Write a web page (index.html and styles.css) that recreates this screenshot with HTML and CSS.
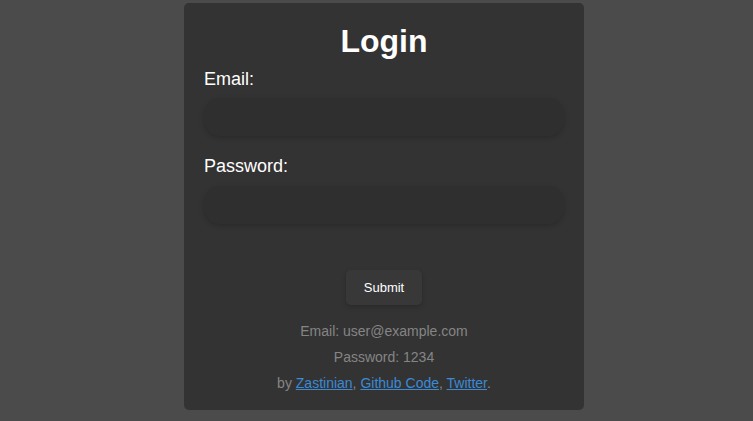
FILE: index.html
```html
<!DOCTYPE html>
<html>
<head>
<meta charset="utf-8">
<link rel="stylesheet" href="styles.css">
</head>
<body>
<div class="card">
  <h1 class="title">Login</h1>
  <form class="form">
    <label class="label" for="email">Email:</label>
    <input class="field" id="email" type="text">
    <label class="label label-pw" for="pw">Password:</label>
    <input class="field" id="pw" type="password">
    <div class="actions"><button class="submit" type="button">Submit</button></div>
  </form>
  <div class="info">
    <p class="line">Email: user@example.com</p>
    <p class="line">Password: 1234</p>
    <p class="line">by <a href="#">Zastinian</a>, <a href="#">Github Code</a>, <a href="#">Twitter</a>.</p>
  </div>
</div>
</body>
</html>
```
FILE: styles.css
```css
html, body {
  margin: 0;
  padding: 0;
  background: #4b4b4b;
  font-family: "Liberation Sans", Arial, sans-serif;
}
body {
  display: flex;
  justify-content: center;
  padding-top: 3px;
  padding-left: 15px;
}
.card {
  width: 400px;
  box-sizing: border-box;
  background: #333333;
  border-radius: 5px;
  padding: 20px 20px 14px;
}
.title {
  margin: 0 0 9px;
  text-align: center;
  color: #ffffff;
  font-size: 32px;
  font-weight: bold;
  line-height: 37px;
}
.form {
  display: flex;
  flex-direction: column;
}
.label {
  color: #ffffff;
  font-size: 18px;
  line-height: 21px;
  margin-bottom: 8px;
}
.label-pw {
  margin-top: 20px;
  margin-bottom: 9px;
}
.field {
  height: 38px;
  box-sizing: border-box;
  border: none;
  outline: none;
  border-radius: 16px;
  background: #2f2f2f;
  box-shadow: 0 2px 5px rgba(0, 0, 0, 0.18);
  color: #fff;
  padding: 0 14px;
  font-size: 16px;
}
.actions {
  display: flex;
  justify-content: center;
  margin-top: 46px;
}
.submit {
  width: 76px;
  height: 35px;
  border: none;
  border-radius: 5px;
  background: #383838;
  color: #ffffff;
  font-family: "Liberation Sans", Arial, sans-serif;
  font-size: 13px;
  font-weight: normal;
  box-shadow: 0 2px 5px rgba(0, 0, 0, 0.2);
  padding: 0;
}
.info {
  margin-top: 13px;
  text-align: center;
  color: #858585;
  font-size: 14px;
}
.line {
  margin: 0;
  line-height: 26px;
}
.line a {
  color: #3b8ad6;
  text-decoration: underline;
}
```
